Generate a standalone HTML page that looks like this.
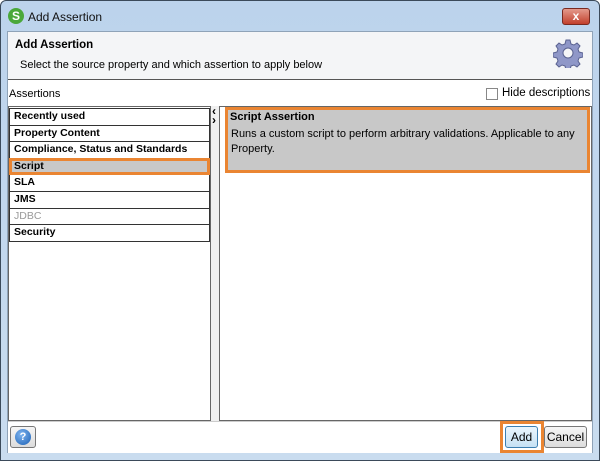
<!DOCTYPE html>
<html><head><style>
*{margin:0;padding:0;box-sizing:border-box}
body{width:600px;height:461px;overflow:hidden;font-family:"Liberation Sans",sans-serif;font-size:11px;background:#fff}
.frame{position:absolute;left:0;top:0;width:600px;height:461px;background:linear-gradient(#bcd3ec,#c9dcef);border:1px solid #3b4a5a;border-radius:6px 6px 0 0}
.abs{position:absolute}
.list{position:absolute;left:9px;top:108px;width:201px;border-top:1px solid #333}
.row{height:16.6px;border:1px solid #333;border-top:none;padding-left:4px;line-height:15px;font-weight:bold;background:#fff;font-size:10.5px;white-space:nowrap}
</style></head><body>
<div class="frame"></div>
<div class="abs" style="left:8px;top:8px;width:16px;height:16px;border-radius:50%;background:#4aa83a;color:#fff;font-weight:bold;font-size:12px;text-align:center;line-height:16px">S</div>
<div class="abs" style="left:28px;top:10px;font-size:12px;color:#111">Add Assertion</div>
<div class="abs" style="left:562px;top:8px;width:28px;height:17px;border-radius:3px;background:linear-gradient(#e49a8c,#c2402c);border:1px solid #7a2a20;color:#fff;font-weight:bold;text-align:center;line-height:15px;font-size:12px">x</div>
<div class="abs" style="left:7px;top:31px;width:586px;height:422px;background:#fff;border:1px solid #8fa3b8"></div>
<div class="abs" style="left:8px;top:32px;width:584px;height:48px;background:#f4f5f7;border-bottom:1px solid #555"></div>
<div class="abs" style="left:15px;top:39px;font-weight:bold;font-size:11.5px">Add Assertion</div>
<div class="abs" style="left:20px;top:59px;font-size:11px">Select the source property and which assertion to apply below</div>
<svg class="abs" style="left:553px;top:38px" width="30" height="30" viewBox="0 0 30 30"><g fill="#8f97c8" stroke="#5a6290" stroke-width="1"><path d="M13 2h4l1 4 3 1 3-2 3 3-2 3 1 3 4 1v4l-4 1-1 3 2 3-3 3-3-2-3 1-1 4h-4l-1-4-3-1-3 2-3-3 2-3-1-3-4-1v-4l4-1 1-3-2-3 3-3 3 2 3-1z"/></g><circle cx="15" cy="15" r="5" fill="#f4f5f7" stroke="#5a6290"/></svg>
<div class="abs" style="left:9px;top:88px">Assertions</div>
<div class="abs" style="left:486px;top:88px;width:12px;height:12px;border:1px solid #888;background:#fff"></div>
<div class="abs" style="left:502px;top:87px;font-size:11.5px">Hide descriptions</div>
<div class="abs" style="left:8px;top:106px;width:203px;height:315px;border:1px solid #666;background:#fff"></div>
<div class="list">
<div class="row">Recently used</div>
<div class="row">Property Content</div>
<div class="row">Compliance, Status and Standards</div>
<div class="row" style="background:#c8c8c8;border:3px solid #ea8532;line-height:11px;padding-left:2px;margin-top:-1px;height:17.6px">Script</div>
<div class="row">SLA</div>
<div class="row">JMS</div>
<div class="row" style="color:#999;font-weight:normal">JDBC</div>
<div class="row">Security</div>
</div>
<div class="abs" style="left:211px;top:106px;width:8px;height:315px;background:#f0f0f0"></div>
<div class="abs" style="left:212px;top:107px;font-size:12px;font-weight:bold;line-height:9px">‹<br>›</div>
<div class="abs" style="left:219px;top:106px;width:373px;height:315px;border:1px solid #666;background:#fff"></div>
<div class="abs" style="left:225px;top:107px;width:365px;height:66px;background:#c8c8c8;border:3px solid #ea8532"></div>
<div class="abs" style="left:230px;top:111px;font-weight:bold">Script Assertion</div>
<div class="abs" style="left:231px;top:127px;width:355px;line-height:15px">Runs a custom script to perform arbitrary validations. Applicable to any Property.</div>
<div class="abs" style="left:8px;top:421px;width:584px;height:32px;background:#fff;border-top:1px solid #ccc"></div>
<div class="abs" style="left:10px;top:426px;width:26px;height:22px;border:1px solid #777;border-radius:3px;background:linear-gradient(#f6f6f6,#dcdcdc)"></div>
<div class="abs" style="left:15px;top:429px;width:16px;height:16px;border-radius:50%;background:radial-gradient(circle at 40% 35%,#7fb5f0,#1a5fb4);color:#fff;font-weight:bold;text-align:center;line-height:16px;font-size:11px">?</div>
<div class="abs" style="left:500px;top:421px;width:44px;height:32px;border:3px solid #ea8532"></div>
<div class="abs" style="left:505px;top:426px;width:33px;height:22px;border:1px solid #3c7fb1;border-radius:3px;background:linear-gradient(#eaf6fd,#c6e1f4);text-align:center;line-height:20px;font-size:12px">Add</div>
<div class="abs" style="left:544px;top:426px;width:43px;height:22px;border:1px solid #777;border-radius:3px;background:linear-gradient(#f6f6f6,#dcdcdc);text-align:center;line-height:20px;font-size:12px">Cancel</div>
</body></html>
